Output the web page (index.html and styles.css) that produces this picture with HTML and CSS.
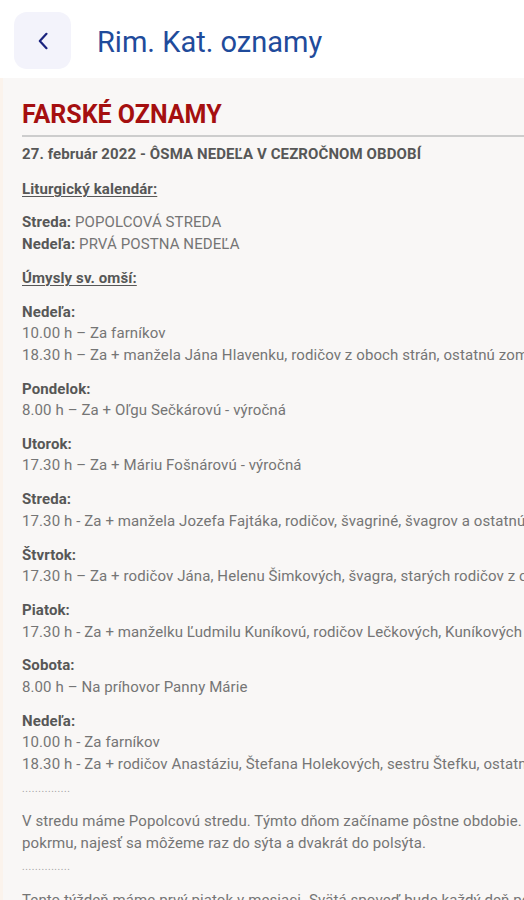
FILE: index.html
```html
<!DOCTYPE html>
<html lang="sk">
<head>
<meta charset="utf-8">
<title>Rim. Kat. oznamy</title>
<link rel="stylesheet" href="styles.css">
</head>
<body>
<header class="appbar">
  <button class="back" aria-label="Späť">
    <svg width="12" height="18" viewBox="0 0 12 18"><path d="M9.5 1.8 L2.8 9 L9.5 16.2" fill="none" stroke="#1a237e" stroke-width="2.2" stroke-linecap="round" stroke-linejoin="round"/></svg>
  </button>
  <h1 class="apptitle">Rim. Kat. oznamy</h1>
</header>
<main class="content">
  <h2 class="heading">FARSKÉ OZNAMY</h2>
  <p class="date">27. február 2022 - ÔSMA NEDEĽA V CEZROČNOM OBDOBÍ</p>
  <p class="section first"><u>Liturgický kalendár:</u></p>
  <p><b>Streda:</b> POPOLCOVÁ STREDA<br><b>Nedeľa:</b> PRVÁ POSTNA NEDEĽA</p>
  <p class="section"><u>Úmysly sv. omší:</u></p>
  <p><b>Nedeľa:</b><br>10.00 h – Za farníkov<br>18.30 h – Za + manžela Jána Hlavenku, rodičov z oboch strán, ostatnú zomrelú rodinu</p>
  <p><b>Pondelok:</b><br>8.00 h – Za + Oľgu Sečkárovú - výročná</p>
  <p><b>Utorok:</b><br>17.30 h – Za + Máriu Fošnárovú - výročná</p>
  <p><b>Streda:</b><br>17.30 h - Za + manžela Jozefa Fajtáka, rodičov, švagriné, švagrov a ostatnú rodinu</p>
  <p><b>Štvrtok:</b><br>17.30 h – Za + rodičov Jána, Helenu Šimkových, švagra, starých rodičov z oboch strán</p>
  <p><b>Piatok:</b><br>17.30 h - Za + manželku Ľudmilu Kuníkovú, rodičov Lečkových, Kuníkových</p>
  <p><b>Sobota:</b><br>8.00 h – Na príhovor Panny Márie</p>
  <p><b>Nedeľa:</b><br>10.00 h - Za farníkov<br>18.30 h - Za + rodičov Anastáziu, Štefana Holekových, sestru Štefku, ostatnú rodinu</p>
  <p class="dots">...............</p>
  <p class="para">V stredu máme Popolcovú stredu. Týmto dňom začíname pôstne obdobie. Je deň pôstu od mäsitého<br>pokrmu, najesť sa môžeme raz do sýta a dvakrát do polsýta.</p>
  <p class="dots">...............</p>
  <p class="para para-last">Tento týždeň máme prvý piatok v mesiaci. Svätá spoveď bude každý deň pol hodiny pred svätou omšou.</p>
</main>
</body>
</html>
```
FILE: styles.css
```css
* { box-sizing: border-box; }
html, body {
  margin: 0;
  padding: 0;
  background: #ffffff;
  font-family: Roboto, "Noto Sans", "Liberation Sans", sans-serif;
  overflow: hidden;
  width: 524px;
  height: 900px;
}
.appbar {
  height: 78px;
  display: flex;
  align-items: center;
  padding: 0 0 0 14px;
  background: #ffffff;
}
.back {
  width: 57px;
  height: 57px;
  border: none;
  border-radius: 13px;
  background: #f3f3fb;
  display: flex;
  align-items: center;
  justify-content: center;
  padding: 0;
  margin-top: 3px;
}
.apptitle {
  margin: 0 0 0 26px;
  font-size: 29px;
  font-weight: 400;
  color: #1f4b9b;
  padding-top: 5px;
}
.content {
  background: #f9f7f6;
  border-left: 3px solid #fbf3ec;
  padding: 23px 0 0 19px;
  white-space: nowrap;
  overflow: hidden;
  height: 822px;
  color: #757575;
  font-size: 15px;
  line-height: 21.6px;
  letter-spacing: 0.1px;
}
.heading {
  margin: 0;
  font-size: 25px;
  line-height: 28px;
  font-weight: 700;
  color: #a50f10;
  letter-spacing: 0;
  padding-bottom: 6px;
  border-bottom: 2px solid #cdcdcd;
}
.date {
  margin: 7px 0 0;
  font-size: 15px;
  font-weight: 700;
  color: #575757;
}
p {
  margin: 12.2px 0 0;
}
.section.first { margin-top: 13px; }
b { color: #575757; font-weight: 700; }
.section {
  color: #575757;
  font-weight: 700;
}
.section u { text-decoration-thickness: 1px; text-underline-offset: 2px; }
.dots {
  font-size: 10px;
  color: #a0a0a0;
  letter-spacing: 0.6px;
  line-height: 12px;
  margin-top: 7px;
}
.para {
  line-height: 22px;
  margin-top: 15px;
}
.para-last { margin-top: 16px; }
```
